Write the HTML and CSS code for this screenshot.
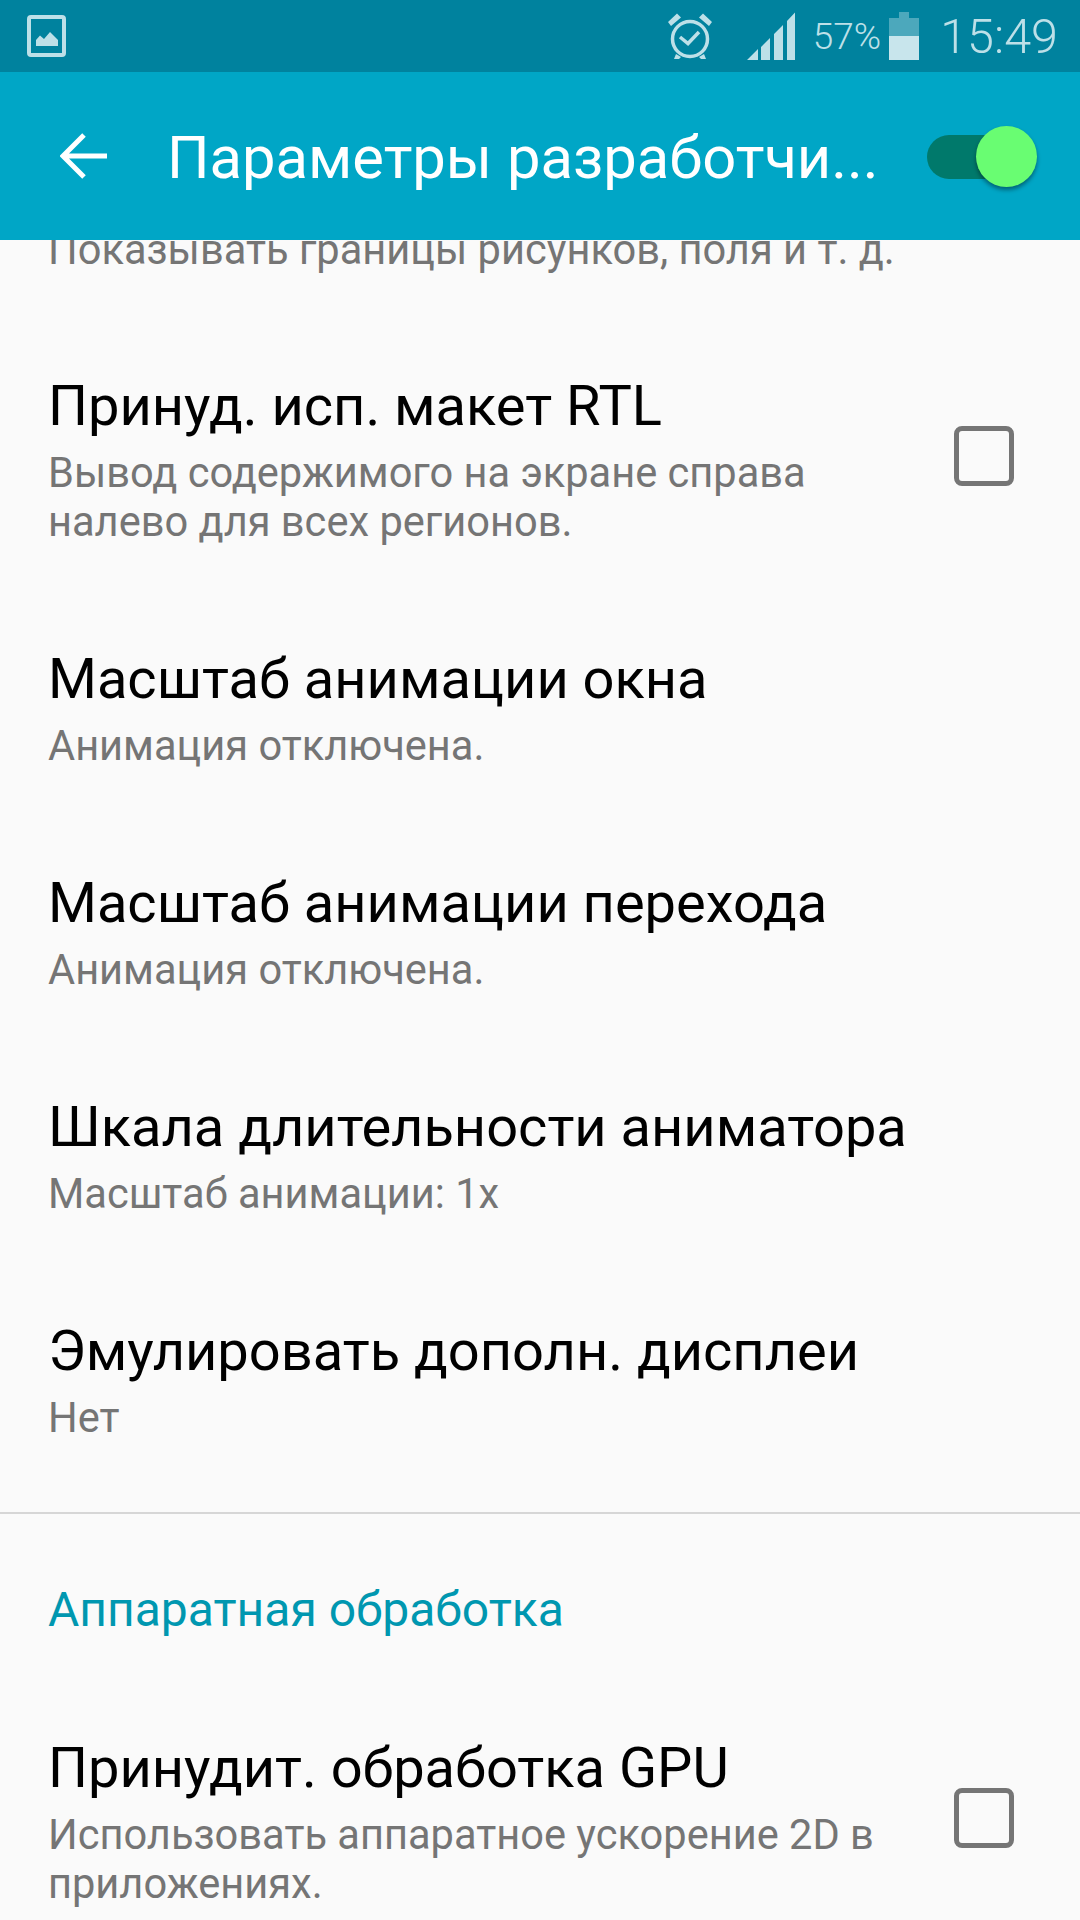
FILE: index.html
```html
<!DOCTYPE html>
<html lang="ru">
<head>
<meta charset="utf-8">
<title>Параметры разработчика</title>
<link rel="stylesheet" href="styles.css">
</head>
<body>
<div class="screen">
  <div class="status">
    <svg class="ic-pic" width="39" height="42" viewBox="0 0 39 42"><rect x="2" y="2" width="35" height="38" rx="2" fill="none" stroke="#bde0e8" stroke-width="4"/><path d="M9 31V25L13 20.500L17 24L23 17L31 25V31Z" fill="#bde0e8"/></svg>
    <div class="status-right">
      <svg class="ic-alarm" width="44" height="47" viewBox="0 0 44 47"><circle cx="22" cy="26" r="17.500" fill="none" stroke="#bde0e8" stroke-width="3.500"/><path d="M0 9L9 0.500L13 4.500L3 13Z M44 9L35 0.500L31 4.500L41 13Z" fill="#bde0e8"/><path d="M12 24L20 30.500L31 19" fill="none" stroke="#bde0e8" stroke-width="3.500"/><path d="M8 41L6 46H11L13 44Z M36 41L38 46H33L31 44Z" fill="#bde0e8"/></svg>
      <svg class="ic-signal" width="48" height="48" viewBox="0 0 48 48"><path d="M0 48L11 37V48Z M14 48V35L23 26V48Z M27 48V22L36 13V48Z M40 48V9L48.500 0V48Z" fill="#bde0e8"/></svg>
      <span class="pct">57%</span>
      <svg class="ic-batt" width="30" height="48" viewBox="0 0 30 48"><path d="M10 0H20V6H30V24H0V6H10Z" fill="#bde0e8" opacity=".4"/><rect y="24" width="30" height="24" fill="#c8e5ec"/></svg>
      <span class="time">15:49</span>
    </div>
  </div>
  <header class="appbar">
    <svg class="ic-back" width="48" height="48" viewBox="0 0 48 48"><path d="M47 24H3M24 3L3 24L24 45" fill="none" stroke="#fff" stroke-width="5"/></svg>
    <h1 class="title">Параметры разработчи...</h1>
    <div class="switch"><span class="track"></span><span class="thumb"></span></div>
  </header>
  <main class="content">
    <div class="scroller">
      <section class="row row-cut">
        <div class="row-text"><div class="sub">Показывать границы рисунков, поля и т. д.</div></div>
      </section>
      <section class="row">
        <div class="row-text">
          <div class="name">Принуд. исп. макет RTL</div>
          <div class="sub">Вывод содержимого на экране справа<br>налево для всех регионов.</div>
        </div>
        <span class="check"></span>
      </section>
      <section class="row">
        <div class="row-text"><div class="name">Масштаб анимации окна</div><div class="sub">Анимация отключена.</div></div>
      </section>
      <section class="row">
        <div class="row-text"><div class="name">Масштаб анимации перехода</div><div class="sub">Анимация отключена.</div></div>
      </section>
      <section class="row">
        <div class="row-text"><div class="name">Шкала длительности аниматора</div><div class="sub">Масштаб анимации: 1x</div></div>
      </section>
      <section class="row">
        <div class="row-text"><div class="name">Эмулировать дополн. дисплеи</div><div class="sub">Нет</div></div>
      </section>
      <hr class="divider">
      <h2 class="group">Аппаратная обработка</h2>
      <section class="row">
        <div class="row-text">
          <div class="name">Принудит. обработка GPU</div>
          <div class="sub">Использовать аппаратное ускорение 2D в<br>приложениях.</div>
        </div>
        <span class="check"></span>
      </section>
    </div>
  </main>
</div>
</body>
</html>
```
FILE: styles.css
```css
* { box-sizing: border-box; }
html, body { margin: 0; padding: 0; }
body { width: 1080px; height: 1920px; overflow: hidden; font-family: Roboto, sans-serif; background: #fafafa; }
.screen { width: 1080px; height: 1920px; display: flex; flex-direction: column; overflow: hidden; }
.status { flex: none; height: 72px; background: #00829e; display: flex; align-items: center; justify-content: space-between; padding: 0 22px 0 27px; }
.status-right { display: flex; align-items: center; }
.ic-alarm { margin-right: 35px; }
.ic-signal { margin-right: 18px; }
.pct { font-size: 37px; font-weight: 300; color: #bde0e8; margin-right: 8px; }
.ic-batt { margin-right: 21px; }
.time { font-size: 48.500px; font-weight: 300; color: #bde0e8; }
.appbar { flex: none; height: 168px; background: #00a6c6; display: flex; align-items: center; padding: 0 43px 0 60px; position: relative; z-index: 1; }
.ic-back { flex: none; margin-right: 59px; }
.title { flex: 1; margin: 0; padding-top: 3px; font-size: 59.700px; font-weight: 400; color: #fff; white-space: nowrap; }
.switch { flex: none; width: 110px; height: 61px; position: relative; }
.track { position: absolute; left: 0; right: 16px; top: 9px; height: 44px; border-radius: 22px; background: #00796b; }
.thumb { position: absolute; right: 0; top: 0; width: 61px; height: 61px; border-radius: 50%; background: #69fd72; box-shadow: 0 3px 4px rgba(0,0,0,.4); }
.content { flex: 1; overflow: hidden; }
.scroller { margin-top: -15px; }
.row { min-height: 224px; padding: 46px 66px 46px 48px; display: flex; align-items: center; justify-content: space-between; }
.row-cut { min-height: 0; padding-top: 0; padding-bottom: 0; height: 94px; align-items: flex-start; }
.name { font-size: 56px; line-height: 83px; color: #000; white-space: nowrap; }
.sub { font-size: 41.600px; line-height: 49px; color: #757575; white-space: nowrap; }
.check { flex: none; width: 60px; height: 60px; border: 5px solid #757575; border-radius: 8px; }
.divider { margin: 24px 0 0; border: 0; height: 2px; background: #d6d6d6; }
.group { margin: 0; padding: 24px 48px 0; height: 167px; display: flex; align-items: center; font-size: 48px; font-weight: 400; color: #0097b0; }
```
